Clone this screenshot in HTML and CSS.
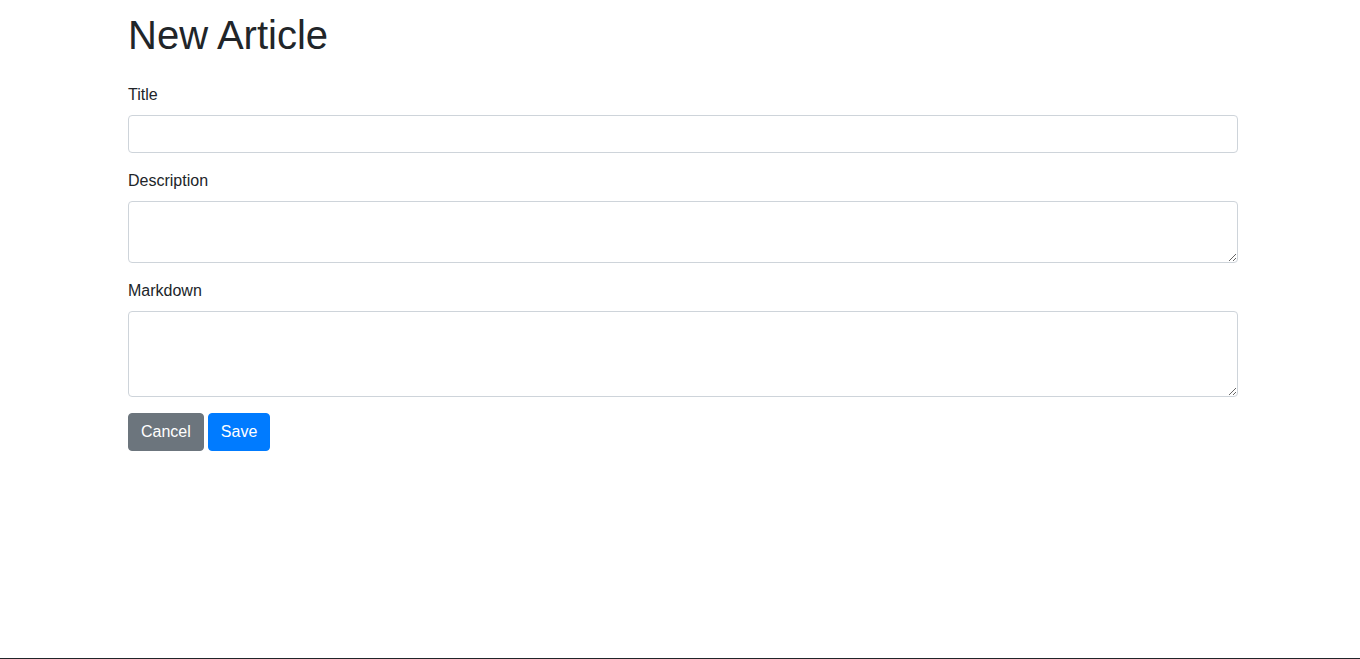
FILE: index.html
```html
<!DOCTYPE html>
<html lang="en">
<head>
<meta charset="utf-8">
<title>New Article</title>
<link rel="stylesheet" href="styles.css">
</head>
<body>
<main class="page">
  <div class="container">
    <h1 class="heading">New Article</h1>
    <form class="form">
      <div class="form-group">
        <label class="label" for="title">Title</label>
        <input class="control" id="title" type="text">
      </div>
      <div class="form-group">
        <label class="label" for="description">Description</label>
        <textarea class="control area" id="description" rows="2"></textarea>
      </div>
      <div class="form-group">
        <label class="label" for="markdown">Markdown</label>
        <textarea class="control area area-3" id="markdown" rows="3"></textarea>
      </div>
      <div class="actions">
        <a class="btn btn-secondary" href="#">Cancel</a>
        <button class="btn btn-primary" type="submit">Save</button>
      </div>
    </form>
  </div>
</main>
<footer class="footer"></footer>
</body>
</html>
```
FILE: styles.css
```css
* { box-sizing: border-box; }
html, body { height: 100%; }
body {
  margin: 0;
  display: flex;
  flex-direction: column;
  font-family: "Liberation Sans", Arial, sans-serif;
  font-size: 16px;
  line-height: 1.5;
  color: #212529;
  background: #fff;
}
.page { flex: 1; }
.container {
  width: 1110px;
  margin-left: 128px;
}
.heading {
  margin: 11px 0 24px;
  font-size: 40px;
  font-weight: 500;
  line-height: 1.2;
}
.form-group { margin-bottom: 16px; display: flex; flex-direction: column; align-items: flex-start; }
.label { display: inline-block; margin-bottom: 8px; }
.control {
  display: block;
  width: 100%;
  height: 38px;
  padding: 6px 12px;
  font-family: inherit;
  font-size: 16px;
  line-height: 1.5;
  color: #495057;
  background: #fff;
  border: 1px solid #ced4da;
  border-radius: 4px;
  margin: 0;
}
.area { height: 62px; resize: vertical; overflow: auto; }
.area-3 { height: 86px; }
.actions { display: flex; gap: 4px; }
.btn {
  display: inline-block;
  padding: 6px 12px;
  font-family: inherit;
  font-size: 16px;
  line-height: 1.5;
  font-weight: 400;
  border: 1px solid transparent;
  border-radius: 4px;
  text-decoration: none;
  color: #fff;
  cursor: pointer;
}
.btn-secondary { background: #6c757d; border-color: #6c757d; }
.btn-primary { background: #007bff; border-color: #007bff; }
.footer { height: 1px; background: #212529; flex: none; }
```
